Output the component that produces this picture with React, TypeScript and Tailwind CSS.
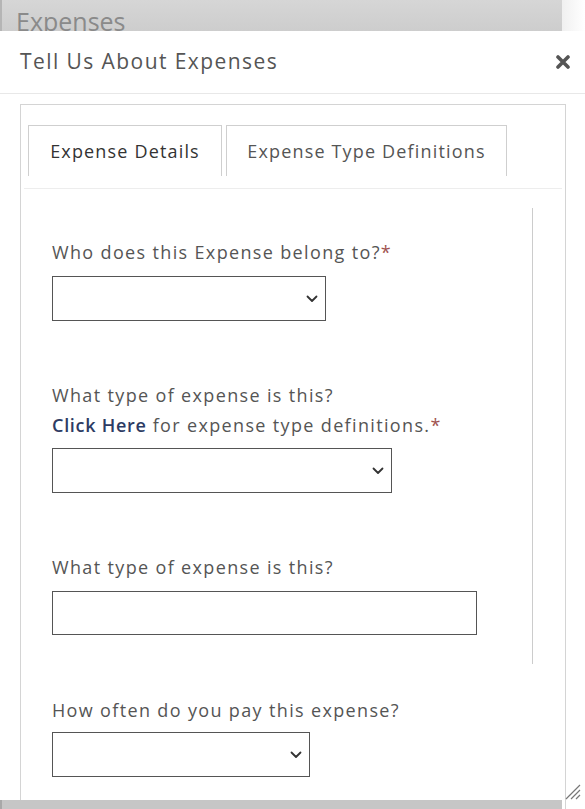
import React from "react"

const Chevron = () => (
    <svg width="12" height="8" viewBox="0 0 12 8" className="absolute right-[7px] top-1/2 -translate-y-1/2">
        <path d="M1.5 1.5 L6 6 L10.5 1.5" fill="none" stroke="#333" strokeWidth="1.8" strokeLinecap="round" strokeLinejoin="round" />
    </svg>
)

const Select = ({ w }: { w: string }) => (
    <div className={`relative h-[45px] border border-[#555] bg-white ${w}`}>
        <Chevron />
    </div>
)

const Star = () => <span className="text-[#a0524f] tracking-normal">*</span>

const App = () => {
    return (
        <div className="relative w-[585px] h-[809px] overflow-hidden bg-white text-[#555]" style={{ fontFamily: '"Open Sans", sans-serif' }}>
            {/* page behind the modal */}
            <div className="flex h-[31px]">
                <div className="w-[562px] h-full overflow-hidden bg-gradient-to-b from-[#d6d6d6] to-[#cdcdcd] border-l-2 border-[#b5b5b5]">
                    <div className="pl-[14px] pt-[3px] text-[25px] leading-[36px] text-[#8a8a8a]">Expenses</div>
                </div>
                <div className="flex-1 bg-gradient-to-l from-white to-[#f0f0f0]" />
            </div>

            {/* modal */}
            <div className="flex flex-col bg-white">
                <div className="flex items-center justify-between h-[63px] pl-[20px] pr-[15px] border-b border-[#e8e8e8]">
                    <h2 className="text-[21px] text-[#555] tracking-[0.068em]">Tell Us About Expenses</h2>
                    <svg width="14" height="14" viewBox="0 0 14 14">
                        <path d="M2 2 L12 12 M12 2 L2 12" stroke="#555" strokeWidth="3.6" strokeLinecap="round" />
                    </svg>
                </div>

                <div className="pt-[10px] pl-[20px] pr-[19px]">
                    <div className="h-[720px] border border-[#d4d4d4] pt-[20px]">
                        <div className="flex gap-[4px] pl-[7px] text-[18px] tracking-[0.065em]">
                            <div className="w-[194px] h-[51px] flex items-center justify-center border border-b-0 border-[#cfcfcf] text-[#333]">
                                Expense Details
                            </div>
                            <div className="w-[281px] h-[51px] flex items-center justify-center border border-b-0 border-[#cfcfcf] text-[#555]">
                                Expense Type Definitions
                            </div>
                        </div>
                        <div className="mt-[12px] mx-[3px] h-px bg-[#ededed]" />

                        <div className="relative pl-[31px] text-[18px] leading-[30px] tracking-[0.075em]">
                            <span className="absolute left-[511px] top-[19px] h-[456px] w-px bg-[#cccccc]" />

                            <p className="pt-[48px]">Who does this Expense belong to?<Star /></p>
                            <div className="mt-[9px]"><Select w="w-[274px]" /></div>

                            <p className="mt-[59px]">What type of expense is this?</p>
                            <p><a className="font-semibold text-[#2d3b63] tracking-[0.04em]">Click Here</a> for expense type definitions.<Star /></p>
                            <div className="mt-[8px]"><Select w="w-[340px]" /></div>

                            <p className="mt-[59px]">What type of expense is this?</p>
                            <div className="mt-[9px] w-[425px] h-[44px] border border-[#555]" />

                            <p className="mt-[60px]">How often do you pay this expense?</p>
                            <div className="mt-[7px]"><Select w="w-[258px]" /></div>
                        </div>
                    </div>
                </div>
            </div>

            {/* resize grip */}
            <svg width="16" height="16" viewBox="0 0 16 16" className="absolute left-[565px] top-[784px]">
                <path d="M1 15 L15 1 M6 15 L15 6 M11 15 L15 11" stroke="#777" strokeWidth="1.2" />
            </svg>

            {/* page footer band behind */}
            <div className="absolute left-0 bottom-0 w-[562px] h-[9px] bg-[#c6c6c6] border-l-2 border-[#a8a8a8]" />
        </div>
    )
}

export default App
